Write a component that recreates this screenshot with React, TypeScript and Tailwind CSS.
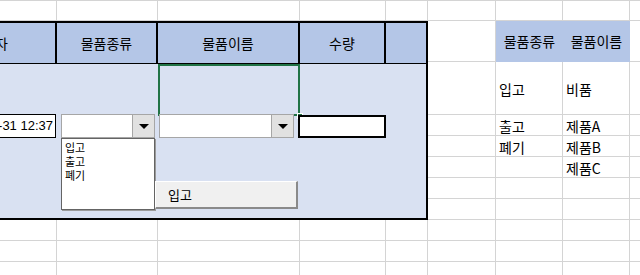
const font = "font-['Malgun_Gothic','Noto_Sans_CJK_KR',sans-serif]";

// sheet geometry (px)
const COLS = [57, 101, 142, 86, 42, 68, 67, 67, 60];
const ROWS = [20, 41, 53, 21, 21, 21, 21, 21, 21, 21, 21];

const kinds = ['입고', '출고', '폐기'];

function GridCells() {
  // background gridlines, skipping the area covered by the form table and the right header
  const cells: React.ReactNode[] = [];
  ROWS.forEach((_, r) => {
    COLS.forEach((_, c) => {
      const inForm = c <= 4 && r >= 1 && r <= 7;
      const inSide = r === 1 && (c === 6 || c === 7);
      if (inForm || inSide) return;
      cells.push(
        <div
          key={`${r}-${c}`}
          className="border-r border-b border-[#d4d4d4]"
          style={{ gridColumnStart: c + 1, gridRowStart: r + 1 }}
        />
      );
    });
  });
  return <>{cells}</>;
}

function ComboBox({ width }: { width: number }) {
  return (
    <div className="flex h-[24px] border border-[#a6a6a6] bg-white" style={{ width }}>
      <div className="flex-1" />
      <div className="flex w-[22px] items-center justify-center border-l border-[#a6a6a6] bg-[#e1e1e1]">
        <div className="h-0 w-0 border-x-[5px] border-t-[5px] border-x-transparent border-t-black" />
      </div>
    </div>
  );
}

export default function App() {
  return (
    <div className={`relative h-[275px] w-[640px] overflow-hidden border-t border-[#d4d4d4] bg-white text-black ${font}`}>
      <div className="grid grid-cols-[57px_101px_142px_86px_42px_68px_67px_67px_60px] grid-rows-[20px_41px_53px_21px_21px_21px_21px_21px_21px_21px_21px]">
        <GridCells />

        {/* form table */}
        <div className="col-start-1 col-span-5 row-start-2 row-span-7 grid grid-cols-[57px_101px_142px_86px_1fr] grid-rows-[41px_1fr] border-y-2 border-r-2 border-black bg-[#d9e1f2]">
          <div className="flex items-center overflow-hidden border-r-2 border-b border-black bg-[#b4c6e7] text-[14px]">
            <span className="ml-[-18px] whitespace-nowrap">일자</span>
          </div>
          <div className="flex items-center justify-center border-r-2 border-b border-black bg-[#b4c6e7] text-[14px]">물품종류</div>
          <div className="flex items-center justify-center border-r-2 border-b border-black bg-[#b4c6e7] text-[14px]">물품이름</div>
          <div className="flex items-center justify-center border-r-2 border-b border-black bg-[#b4c6e7] text-[14px]">수량</div>
          <div className="border-b border-black bg-[#b4c6e7]" />

          {/* body */}
          <div className="col-span-5 grid grid-cols-[57px_101px_142px_86px_1fr] grid-rows-[52px_1fr]">
            <div className="col-start-3 row-start-1 border-2 border-[#217346]" />
          </div>
        </div>

        {/* side lookup header */}
        <div className="col-start-7 row-start-2 flex items-center justify-center bg-[#b4c6e7] text-[14px]">물품종류</div>
        <div className="col-start-8 row-start-2 flex items-center justify-center bg-[#b4c6e7] text-[14px]">물품이름</div>
      </div>

      {/* side lookup values */}
      <div className="absolute left-[496px] top-[62px] grid w-[134px] grid-cols-[67px_67px] grid-rows-[53px_21px_21px_21px] text-[14px]">
        <div className="flex items-center pl-[3px]">입고</div>
        <div className="flex items-center pl-[3px]">비품</div>
        <div className="flex items-center pl-[3px]">출고</div>
        <div className="flex items-center pl-[3px]">제품A</div>
        <div className="flex items-center pl-[3px]">폐기</div>
        <div className="flex items-center pl-[3px]">제품B</div>
        <div />
        <div className="flex items-center pl-[3px]">제품C</div>
      </div>

      {/* column header highlight for selected column */}
      <div className="absolute left-[158px] top-[-1px] h-[1px] w-[142px] bg-[#8fcfa8]" />

      {/* selection handle */}
      <div className="absolute left-[297px] top-[112px] h-[6px] w-[6px] border border-white bg-[#217346]" />

      {/* date textbox */}
      <div className="absolute left-[-60px] top-[113px] flex h-[24px] w-[116px] items-center justify-end border border-black bg-white pr-[2px] font-['Liberation_Sans',sans-serif] text-[13px]">
        2023-12-31 12:37
      </div>

      {/* combo boxes */}
      <div className="absolute left-[61px] top-[113px]">
        <ComboBox width={94} />
        <div className="h-[72px] w-[94px] border border-[#646464] bg-white pl-[3px] pt-[1px] text-[11px] leading-[14px] shadow-[1px_1px_0_#9a9a9a]">
          {kinds.map((k) => (
            <div key={k}>{k}</div>
          ))}
        </div>
      </div>
      <div className="absolute left-[159px] top-[113px]">
        <ComboBox width={135} />
      </div>

      {/* quantity textbox */}
      <div className="absolute left-[298px] top-[114px] h-[23px] w-[88px] border-2 border-black bg-white" />

      {/* submit button */}
      <button
        type="button"
        className="absolute left-[155px] top-[180px] flex h-[28px] w-[143px] items-center border-t border-l border-t-white border-l-white border-r-2 border-b-2 border-r-[#8a8a8a] border-b-[#8a8a8a] bg-[#f0f0f0] pl-[12px] text-[13px]"
      >
        입고
      </button>
    </div>
  );
}
